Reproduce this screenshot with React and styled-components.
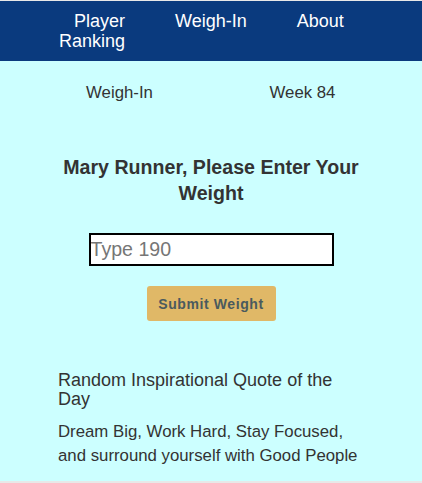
import React from "react";
import styled, { createGlobalStyle } from "styled-components";

const GlobalStyle = createGlobalStyle`
  body {
    margin: 0;
    padding-top: 1px;
    background: #e8e8e8;
    font-family: "Liberation Sans", Arial, sans-serif;
  }
`;

const navLinks = [
  { label: "Player Ranking", width: "67px" },
  { label: "Weigh-In" },
  { label: "About" },
];

const App = () => {
  return (
    <>
      <GlobalStyle />
      <Page>
        <NavBar>
          {navLinks.map((link) => (
            <NavLink key={link.label} $width={link.width}>
              {link.label}
            </NavLink>
          ))}
        </NavBar>
        <InfoRow>
          <InfoCell>Weigh-In</InfoCell>
          <InfoCell>Week 84</InfoCell>
        </InfoRow>
        <Heading>Mary Runner, Please Enter Your Weight</Heading>
        <WeightForm onSubmit={(e) => e.preventDefault()}>
          <WeightInput type="text" placeholder="Type 190" />
          <SubmitButton type="submit">Submit Weight</SubmitButton>
        </WeightForm>
        <Quote>
          <QuoteTitle>Random Inspirational Quote of the Day</QuoteTitle>
          <QuoteText>
            Dream Big, Work Hard, Stay Focused, and surround yourself with Good
            People
          </QuoteText>
        </Quote>
      </Page>
    </>
  );
};

const Page = styled.div`
  display: flex;
  flex-direction: column;
  height: 480px;
  background: #ccffff;
  color: #333;
`;

const NavBar = styled.nav`
  display: flex;
  align-items: flex-start;
  gap: 50px;
  height: 60px;
  box-sizing: border-box;
  padding: 10px 0 0 58px;
  background: #0a3a7e;
`;

const NavLink = styled.a`
  width: ${(p) => p.$width || "auto"};
  color: #fff;
  font-size: 18px;
  line-height: 20px;
  text-align: right;
  cursor: pointer;
`;

const InfoRow = styled.div`
  display: grid;
  grid-template-columns: 1fr 1fr;
  padding: 0 28px;
  margin-top: 22px;
`;

const InfoCell = styled.div`
  text-align: center;
  font-size: 16.8px;
  line-height: 19px;
`;

const Heading = styled.h2`
  margin: 52px 30px 0;
  font-size: 19.6px;
  line-height: 26px;
  font-weight: bold;
  text-align: center;
`;

const WeightForm = styled.form`
  display: flex;
  flex-direction: column;
  align-items: center;
  gap: 20px;
  margin-top: 27px;
`;

const WeightInput = styled.input`
  width: 245px;
  height: 33px;
  box-sizing: border-box;
  border: 2px solid #000;
  padding: 0;
  background: #fff;
  font-family: "Liberation Sans", Arial, sans-serif;
  font-size: 19.6px;
  outline: none;

  &::placeholder {
    color: #767676;
  }
`;

const SubmitButton = styled.button`
  width: 129px;
  height: 35px;
  border: none;
  border-radius: 3px;
  background: #e0b867;
  color: #4a5a5e;
  font-family: "Liberation Sans", Arial, sans-serif;
  font-size: 14px;
  font-weight: bold;
  letter-spacing: 0.6px;
  cursor: pointer;
`;

const Quote = styled.section`
  margin: 50px 58px 0;
`;

const QuoteTitle = styled.h3`
  margin: 0;
  font-size: 18px;
  line-height: 19px;
  font-weight: normal;
`;

const QuoteText = styled.p`
  margin: 11px 0 0;
  font-size: 16.8px;
  line-height: 23.5px;
`;

export default App;
